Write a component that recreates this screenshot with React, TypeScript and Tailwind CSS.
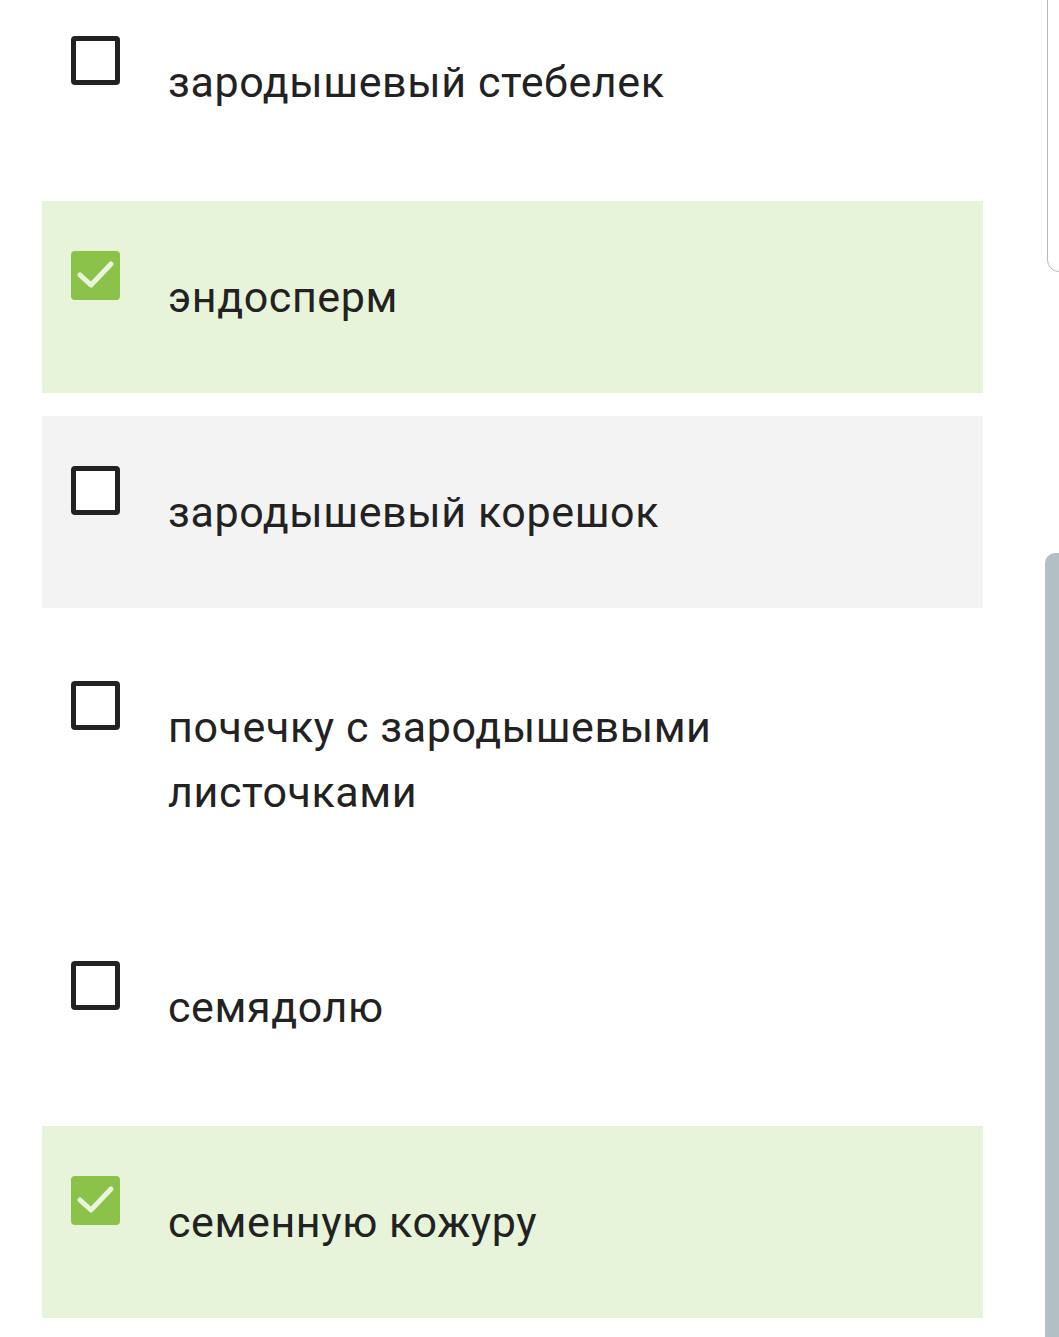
import React from "react";

type Option = {
  text: string;
  checked: boolean;
  tone: "green" | "gray" | "none";
};

const options: Option[] = [
  { text: "зародышевый стебелек", checked: false, tone: "none" },
  { text: "эндосперм", checked: true, tone: "green" },
  { text: "зародышевый корешок", checked: false, tone: "gray" },
  { text: "почечку с зародышевыми листочками", checked: false, tone: "none" },
  { text: "семядолю", checked: false, tone: "none" },
  { text: "семенную кожуру", checked: true, tone: "green" },
];

function Box({ checked }: { checked: boolean }) {
  if (checked) {
    return (
      <div className="w-[49px] h-[49px] shrink-0 rounded-[4px] bg-[#8bc34a]">
        <svg viewBox="0 0 49 49" className="w-[49px] h-[49px]">
          <polyline
            points="9,24 20,34 40,13"
            fill="none"
            stroke="#e9f6dd"
            strokeWidth="5"
            strokeLinecap="round"
            strokeLinejoin="round"
          />
        </svg>
      </div>
    );
  }
  return (
    <div className="w-[49px] h-[49px] shrink-0 rounded-[4px] border-[5px] border-[#222222] bg-white" />
  );
}

export default function App() {
  return (
    <div className="relative w-[1059px] h-[1337px] overflow-hidden bg-white font-['Roboto',sans-serif]">
      <div className="mt-[-14px] ml-[42px] w-[941px] flex flex-col gap-[23px]">
        {options.map((o) => (
          <div
            key={o.text}
            className={
              "flex items-start pl-[29px] pr-[60px] pt-[50px] pb-[63px] " +
              (o.tone === "green"
                ? "bg-[#e7f4da]"
                : o.tone === "gray"
                ? "bg-[#f3f3f3]"
                : "bg-white")
            }
          >
            <Box checked={o.checked} />
            <p className="ml-[48px] mt-[14px] text-[43px] leading-[65px] tracking-[0.6px] text-[#222222]">
              {o.text}
            </p>
          </div>
        ))}
      </div>

      {/* edge of a card to the right */}
      <div className="absolute left-[1047px] top-[-12px] w-[30px] h-[284px] border border-[#b8b8b8] rounded-bl-[12px]" />

      {/* scrollbar thumb */}
      <div className="absolute left-[1045px] top-[553px] w-[20px] bottom-0 bg-[#b3bfc5] rounded-tl-[10px]" />
    </div>
  );
}
